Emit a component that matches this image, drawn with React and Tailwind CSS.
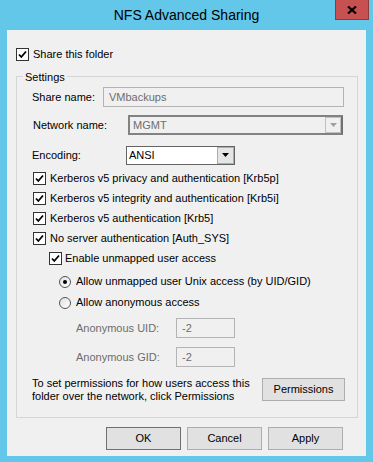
import React from "react";

const font = { fontFamily: '"Liberation Sans", Arial, sans-serif' };

function Check({ checked = true }) {
  return (
    <div className="w-[13px] h-[13px] border border-[#333] bg-white flex items-center justify-center shrink-0">
      {checked && (
        <svg width="11" height="11" viewBox="0 0 11 11">
          <path d="M2 5.5 L4.3 8 L9 2.5" stroke="#000" strokeWidth="1.8" fill="none" />
        </svg>
      )}
    </div>
  );
}

function Radio({ checked }) {
  return (
    <div className="w-[12px] h-[12px] rounded-full border border-[#555] bg-gradient-to-br from-[#e0e0e0] to-white flex items-center justify-center shrink-0">
      {checked && <div className="w-[4px] h-[4px] rounded-full bg-black" />}
    </div>
  );
}

function Arrow({ color }) {
  return (
    <svg width="7" height="4" viewBox="0 0 7 4">
      <path d="M0 0 H7 L3.5 4 Z" fill={color} />
    </svg>
  );
}

function Btn({ children, w = "w-[75px]", strong }) {
  return (
    <div
      className={`${w} h-[23px] flex items-center justify-center bg-[#e1e1e1] border ${
        strong ? "border-[#707070]" : "border-[#adadad]"
      } text-black`}
    >
      {children}
    </div>
  );
}

export default function App() {
  return (
    <div className="w-[373px] h-[462px] bg-[#63c7ea] flex flex-col text-[11px] text-black" style={font}>
      {/* title bar */}
      <div className="relative h-[30px] flex items-center justify-center">
        <span className="text-[14px] text-black pt-[1px]">NFS Advanced Sharing</span>
        <div className="absolute right-[4px] top-0 w-[34px] h-[20px] bg-[#c75050] border border-t-0 border-[#8d3a3a] flex items-center justify-center">
          <svg width="10" height="8" viewBox="0 0 10 8">
            <path d="M1 0.5 L9 7.5 M9 0.5 L1 7.5" stroke="#000" strokeWidth="2.2" />
          </svg>
        </div>
      </div>

      {/* client */}
      <div className="mx-[7px] h-[426px] bg-[#f0f0f0] flex flex-col">
        <div className="flex items-center gap-[4px] pl-[9px] mt-[18px] h-[13px]">
          <Check />
          <span>Share this folder</span>
        </div>

        {/* group box */}
        <div className="relative ml-[9px] w-[342px] mt-[15px] h-[342px] border border-[#d5d5d5] flex flex-col">
          <span className="absolute -top-[8px] left-[6px] bg-[#f0f0f0] px-[2px] leading-[16px]">Settings</span>

          <div className="flex items-center h-[20px] mt-[10px]">
            <span className="w-[86px] pl-[15px]">Share name:</span>
            <div className="w-[241px] h-[20px] border border-[#b4b4b4] bg-[#f0f0f0] flex items-center pl-[5px] text-[#6d6d6d]">
              VMbackups
            </div>
          </div>

          <div className="flex items-center h-[20px] mt-[8px]">
            <span className="w-[111px] pl-[16px]">Network name:</span>
            <div className="w-[215px] h-[20px] border-2 border-[#828282] border-r-[#707070] bg-[#f0f0f0] flex items-center pl-[3px] text-[#6d6d6d]">
              <span className="flex-1">MGMT</span>
              <div className="w-[16px] h-[16px] border border-[#c0c0c0] flex items-center justify-center">
                <Arrow color="#a0a0a0" />
              </div>
            </div>
          </div>

          <div className="flex items-center h-[20px] mt-[10px]">
            <span className="w-[109px] pl-[15px]">Encoding:</span>
            <div className="w-[109px] h-[19px] border border-[#646464] bg-white flex items-center pl-[2px]">
              <span className="flex-1">ANSI</span>
              <div className="w-[17px] h-[17px] bg-[#e5e5e5] border border-[#adadad] flex items-center justify-center">
                <Arrow color="#000" />
              </div>
            </div>
          </div>

          <div className="flex flex-col mt-[3px] pl-[16px]">
            {[
              "Kerberos v5 privacy and authentication [Krb5p]",
              "Kerberos v5 integrity and authentication [Krb5i]",
              "Kerberos v5 authentication [Krb5]",
              "No server authentication [Auth_SYS]",
            ].map((t) => (
              <div key={t} className="flex items-center gap-[4px] h-[20px]">
                <Check />
                <span>{t}</span>
              </div>
            ))}
            <div className="flex items-center gap-[3px] h-[20px] pl-[16px]">
              <Check />
              <span>Enable unmapped user access</span>
            </div>
          </div>

          <div className="flex flex-col pl-[42px] mt-[3px]">
            <div className="flex items-center gap-[5px] h-[21px]">
              <Radio checked />
              <span>Allow unmapped user Unix access (by UID/GID)</span>
            </div>
            <div className="flex items-center gap-[5px] h-[21px]">
              <Radio />
              <span>Allow anonymous access</span>
            </div>
          </div>

          <div className="flex flex-col pl-[59px] mt-[5px] text-[#6d6d6d]">
            <div className="flex items-center h-[20px]">
              <span className="w-[100px]">Anonymous UID:</span>
              <div className="w-[59px] h-[20px] border border-[#b4b4b4] flex items-center pl-[5px]">-2</div>
            </div>
            <div className="flex items-center h-[20px] mt-[9px]">
              <span className="w-[100px]">Anonymous GID:</span>
              <div className="w-[59px] h-[20px] border border-[#b4b4b4] flex items-center pl-[5px]">-2</div>
            </div>
          </div>

          <div className="flex items-center mt-[10px] pl-[15px] h-[25px]">
            <div className="w-[230px] leading-[13px] whitespace-nowrap">
              To set permissions for how users access this
              <br />
              folder over the network, click Permissions
            </div>
            <Btn w="w-[83px]">Permissions</Btn>
          </div>
        </div>

        <div className="flex justify-end gap-[6px] pr-[23px] mt-[9px]">
          <Btn strong>OK</Btn>
          <Btn>Cancel</Btn>
          <Btn>Apply</Btn>
        </div>
      </div>
    </div>
  );
}
